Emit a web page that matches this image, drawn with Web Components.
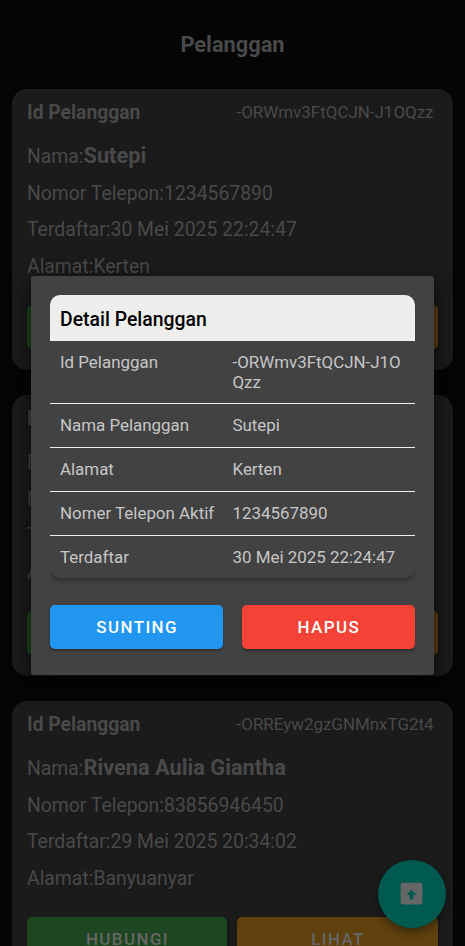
<!DOCTYPE html>
<html lang="id">
<head>
<meta charset="utf-8">
<title>Pelanggan</title>
<style>
html,body{margin:0;height:946px;overflow:hidden;background:#050505}
body{font-family:Roboto,"Liberation Sans",sans-serif}
</style>
</head>
<body>
<customer-page>
  <customer-card code="-ORWmv3FtQCJN-J1OQzz" name="Sutepi" phone="1234567890" date="30 Mei 2025 22:24:47" address="Kerten"></customer-card>
  <customer-card></customer-card>
  <customer-card code="-ORREyw2gzGNMnxTG2t4" name="Rivena Aulia Giantha" phone="83856946450" date="29 Mei 2025 20:34:02" address="Banyuanyar"></customer-card>
  <upload-fab slot="fab"></upload-fab>
  <detail-dialog slot="dialog">
    <detail-row label="Id Pelanggan">-ORWmv3FtQCJN-J1OQzz</detail-row>
    <detail-row label="Nama Pelanggan">Sutepi</detail-row>
    <detail-row label="Alamat">Kerten</detail-row>
    <detail-row label="Nomer Telepon Aktif">1234567890</detail-row>
    <detail-row label="Terdaftar" class="last">30 Mei 2025 22:24:47</detail-row>
    <action-button slot="actions" style="--bg:#2196f3">SUNTING</action-button>
    <action-button slot="actions" style="--bg:#f44336">HAPUS</action-button>
  </detail-dialog>
</customer-page>
<script>
class Base extends HTMLElement {
  constructor() {
    super();
    this.attachShadow({ mode: 'open' });
  }
  connectedCallback() { this.shadowRoot.innerHTML = this.render(); }
  attr(n) { return this.getAttribute(n) || ''; }
}

customElements.define('customer-page', class extends Base {
  render() {
    return `<style>
      :host{display:block;position:relative;height:946px;overflow:hidden;background:#050505;color:#494949}
      h1{margin:0;height:89px;line-height:90px;text-align:center;font-size:21.8px;font-weight:700}
      main{display:flex;flex-direction:column;gap:25px;padding:0 12px}
    </style>
    <h1>Pelanggan</h1><main><slot></slot></main><slot name="fab"></slot><slot name="dialog"></slot>`;
  }
});

customElements.define('customer-card', class extends Base {
  render() {
    return `<style>
      :host{display:block;box-sizing:border-box;height:281px;flex:none;padding:12px 15px 0;border-radius:15px;background:#1b1b1b;font-size:19.36px}
      .top{display:flex;justify-content:space-between;align-items:flex-start;height:24px;line-height:23px;padding-right:4.5px}
      .top b{font-size:19.3px}.top span{font-size:16.95px;line-height:23px}
      .line{height:36.2px;line-height:36.2px;white-space:nowrap}
      .name{height:39.2px;line-height:38px;margin-top:12px}
      .name b{font-size:21.75px}
      .buttons{display:flex;gap:10px;margin-top:20px}
      .buttons action-button{--pad:1px 0 0 1px}
    </style>
    <div class="top"><b>Id Pelanggan</b><span>${this.attr('code')}</span></div>
    <div class="line name">Nama:<b>${this.attr('name')}</b></div>
    <div class="line">Nomor Telepon:${this.attr('phone')}</div>
    <div class="line">Terdaftar:${this.attr('date')}</div>
    <div class="line">Alamat:${this.attr('address')}</div>
    <div class="buttons">
      <action-button style="--bg:#1e4620;--fg:#666;flex:0 0 200px">HUBUNGI</action-button>
      <action-button style="--bg:#5f410e;--fg:#666">LIHAT</action-button>
    </div>`;
  }
});

customElements.define('action-button', class extends Base {
  render() {
    return `<style>
      :host{display:block;flex:1}
      button{display:block;width:100%;height:44px;margin:0;padding:var(--pad,0 0 1px 1px);border:0;border-radius:5px;background:var(--bg);color:var(--fg,#fff);font:500 16.9px Roboto,sans-serif;letter-spacing:1.45px;box-shadow:0 2px 3px rgba(0,0,0,.3)}
    </style><button><slot></slot></button>`;
  }
});

customElements.define('upload-fab', class extends Base {
  render() {
    return `<style>
      :host{position:absolute;left:377.8px;top:859.8px;width:68px;height:68px;border-radius:50%;background:#005a50;display:grid;place-items:center;box-shadow:0 4px 8px rgba(0,0,0,.4)}
      svg{display:block}
    </style>
    <svg width="29" height="29" viewBox="0 0 24 24"><path fill="#666" fill-rule="evenodd" d="M4.5 3h15A1.5 1.5 0 0 1 21 4.5v15a1.5 1.5 0 0 1-1.5 1.5h-15A1.5 1.5 0 0 1 3 19.5v-15A1.5 1.5 0 0 1 4.5 3zM7.8 13h2.7v4h3v-4h2.7L12 8.8z"/></svg>`;
  }
});

customElements.define('detail-dialog', class extends Base {
  render() {
    return `<style>
      :host{position:absolute;box-sizing:border-box;left:31px;top:276px;width:403px;height:399px;padding:19px 19.3px 0;background:#424242;border-radius:2.4px;box-shadow:0 10px 26px rgba(0,0,0,.45),0 3px 12px rgba(0,0,0,.3)}
      .table{height:283px;border-radius:10px;overflow:hidden;background:#424242;color:#c6c6c6}
      .clip{height:310px;overflow:hidden}
      .table{box-shadow:0 3px 4px rgba(0,0,0,.28)}
      h2{margin:0;box-sizing:border-box;height:46px;padding-left:9.7px;line-height:49px;font-size:19.4px;font-weight:500;background:#eee;color:#000}
      .actions{display:flex;gap:19px}
    </style>
    <div class="clip"><div class="table"><h2>Detail Pelanggan</h2><slot></slot></div></div>
    <div class="actions"><slot name="actions"></slot></div>`;
  }
});

customElements.define('detail-row', class extends Base {
  render() {
    return `<style>
      :host{display:grid;grid-template-columns:172.5px 1fr;box-sizing:border-box;min-height:44px;padding:12px 9.7px 10.6px;border-bottom:1px solid #eee;font-size:16.92px;line-height:19.7px}
      :host(.last){border:0}
      span{overflow-wrap:anywhere;word-break:break-all}
    </style><span>${this.attr('label')}</span><span><slot></slot></span>`;
  }
});
</script>
</body>
</html>
